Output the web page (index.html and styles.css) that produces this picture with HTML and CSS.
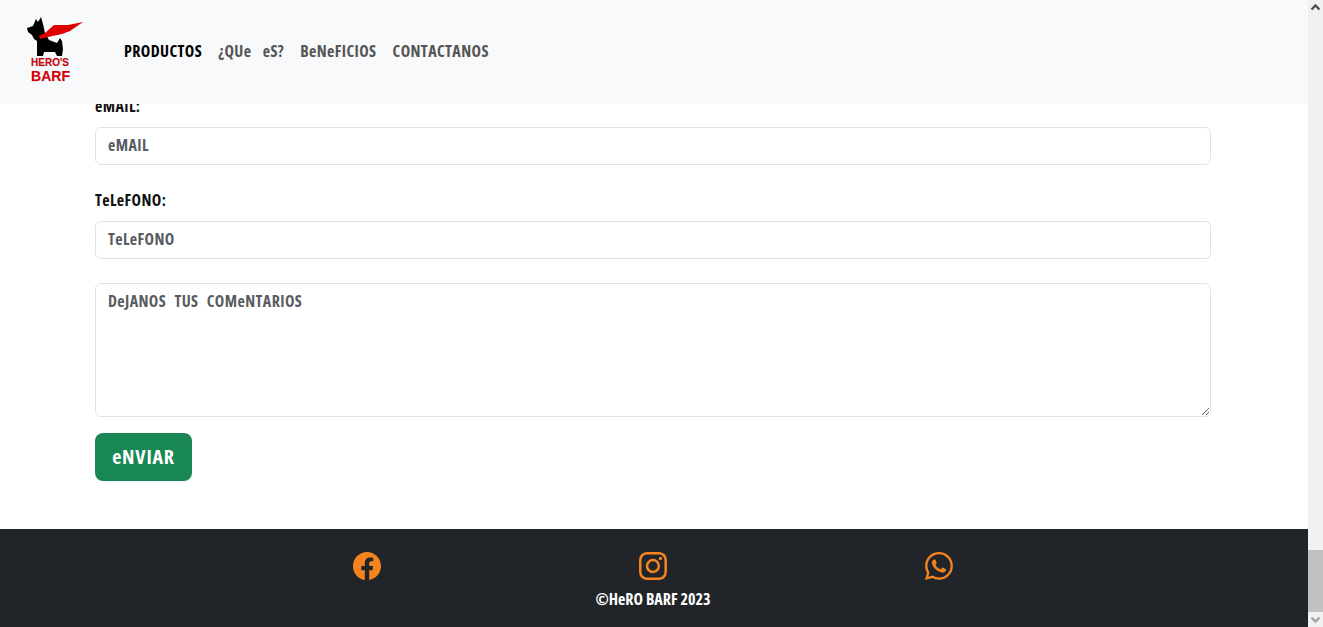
FILE: index.html
```html
<!DOCTYPE html>
<html lang="es">
<head>
    <meta charset="UTF-8">
    <title>Hero's Barf</title>
    <meta name="viewport" content="width=device-width, initial-scale=1">
    <link rel="stylesheet" href="styles.css">
</head>
<body>
    <div class="window">
        <div class="page">
            <nav class="navbar">
                <a class="brand" href="#">
                    <svg class="logo" viewBox="24 14 64 72">
                        <path class="dog" d="M27 28 L33 26 L36 19 L38 22 L41 17 L43 24 L45 33 L49 40 L57 43 L60 38 L62 41 L63 49 L62 56 L57 56 L55 52 L44 52 L43 56 L37 56 L37 41 L34 39 L32 35 L28 32 Z"/>
                        <path class="cape" d="M39 36 L45 33 L54 25 L68 25 L83 22 L70 31 L62 34 L48 37 L40 39 Z"/>
                        <text class="logo-top" x="50" y="66" text-anchor="middle">HERO'S</text>
                        <text class="logo-bottom" x="50.5" y="81" text-anchor="middle">BARF</text>
                    </svg>
                </a>
                <ul class="nav-links">
                    <li><a class="active" href="#">PRODUCTOS</a></li>
                    <li><a href="#">¿QUe eS?</a></li>
                    <li><a href="#">BeNeFICIOS</a></li>
                    <li><a href="#">CONTACTANOS</a></li>
                </ul>
            </nav>

            <main class="content">
                <form class="contact-form">
                    <div class="field">
                        <label for="email">eMAIL:</label>
                        <input id="email" type="text" placeholder="eMAIL">
                    </div>
                    <div class="field">
                        <label for="telefono">TeLeFONO:</label>
                        <input id="telefono" type="text" placeholder="TeLeFONO">
                    </div>
                    <textarea placeholder="DeJANOS TUS COMeNTARIOS"></textarea>
                    <button type="submit">eNVIAR</button>
                </form>
            </main>

            <footer class="footer">
                <div class="social">
                    <a href="#"><svg viewBox="0 0 16 16"><path d="M16 8.049c0-4.446-3.582-8.05-8-8.05C3.58 0-.002 3.603-.002 8.05c0 4.017 2.926 7.347 6.75 7.951v-5.625h-2.03V8.05H6.75V6.275c0-2.017 1.195-3.131 3.022-3.131.876 0 1.791.157 1.791.157v1.98h-1.009c-.993 0-1.303.621-1.303 1.258v1.51h2.218l-.354 2.326H9.25V16c3.824-.604 6.75-3.934 6.75-7.951z"/></svg></a>
                    <a href="#"><svg viewBox="0 0 16 16"><path d="M8 0C5.829 0 5.556.01 4.703.048 3.85.088 3.269.222 2.76.42a3.917 3.917 0 0 0-1.417.923A3.927 3.927 0 0 0 .42 2.76C.222 3.268.087 3.85.048 4.7.01 5.555 0 5.827 0 8.001c0 2.172.01 2.444.048 3.297.04.852.174 1.433.372 1.942.205.526.478.972.923 1.417.444.445.89.719 1.416.923.51.198 1.09.333 1.942.372C5.555 15.99 5.827 16 8 16s2.444-.01 3.298-.048c.851-.04 1.434-.174 1.943-.372a3.916 3.916 0 0 0 1.416-.923c.445-.445.718-.891.923-1.417.197-.509.332-1.09.372-1.942C15.99 10.445 16 10.173 16 8s-.01-2.445-.048-3.299c-.04-.851-.175-1.433-.372-1.941a3.926 3.926 0 0 0-.923-1.417A3.911 3.911 0 0 0 13.24.42c-.51-.198-1.092-.333-1.943-.372C10.443.01 10.172 0 7.998 0h.003zm-.717 1.442h.718c2.136 0 2.389.007 3.232.046.78.035 1.204.166 1.486.275.373.145.64.319.92.599.28.28.453.546.598.92.11.281.24.705.275 1.485.039.843.047 1.096.047 3.231s-.008 2.389-.047 3.232c-.035.78-.166 1.203-.275 1.485a2.47 2.47 0 0 1-.599.919c-.28.28-.546.453-.92.598-.28.11-.704.24-1.485.276-.843.038-1.096.047-3.232.047s-2.39-.009-3.233-.047c-.78-.036-1.203-.166-1.485-.276a2.478 2.478 0 0 1-.92-.598 2.48 2.48 0 0 1-.6-.92c-.109-.281-.24-.705-.275-1.485-.038-.843-.046-1.096-.046-3.233 0-2.136.008-2.388.046-3.231.036-.78.166-1.204.276-1.486.145-.373.319-.64.599-.92.28-.28.546-.453.92-.598.282-.11.705-.24 1.485-.276.738-.034 1.024-.044 2.515-.045v.002zm4.988 1.328a.96.96 0 1 0 0 1.92.96.96 0 0 0 0-1.92zm-4.27 1.122a4.109 4.109 0 1 0 0 8.217 4.109 4.109 0 0 0 0-8.217zm0 1.441a2.667 2.667 0 1 1 0 5.334 2.667 2.667 0 0 1 0-5.334z"/></svg></a>
                    <a href="#"><svg viewBox="0 0 16 16"><path d="M13.601 2.326A7.854 7.854 0 0 0 7.994 0C3.627 0 .068 3.558.064 7.926c0 1.399.366 2.76 1.057 3.965L0 16l4.204-1.102a7.933 7.933 0 0 0 3.79.965h.004c4.368 0 7.926-3.558 7.93-7.93A7.898 7.898 0 0 0 13.6 2.326zM7.994 14.521a6.573 6.573 0 0 1-3.356-.92l-.24-.144-2.494.654.666-2.433-.156-.251a6.56 6.56 0 0 1-1.007-3.505c0-3.626 2.957-6.584 6.591-6.584a6.56 6.56 0 0 1 4.66 1.931 6.557 6.557 0 0 1 1.928 4.66c-.004 3.639-2.961 6.592-6.592 6.592zm3.615-4.934c-.197-.099-1.17-.578-1.353-.646-.182-.065-.315-.099-.445.099-.133.197-.513.646-.627.775-.114.133-.232.148-.43.05-.197-.1-.836-.308-1.592-.985-.59-.525-.985-1.175-1.103-1.372-.114-.198-.011-.304.088-.403.087-.088.197-.232.296-.346.1-.114.133-.198.198-.33.065-.134.034-.248-.015-.347-.05-.099-.445-1.076-.612-1.47-.16-.389-.323-.335-.445-.34-.114-.007-.247-.007-.38-.007a.729.729 0 0 0-.529.247c-.182.198-.691.677-.691 1.654 0 .977.71 1.916.81 2.049.098.133 1.394 2.132 3.383 2.992.47.205.84.326 1.129.418.475.152.904.129 1.246.08.38-.058 1.171-.48 1.338-.943.164-.464.164-.86.114-.943-.049-.084-.182-.133-.38-.232z"/></svg></a>
                </div>
                <p class="copyright">©HeRO BARF 2023</p>
            </footer>
        </div>

        <div class="scrollbar">
            <svg class="arrow arrow-up" viewBox="0 0 15 15"><path d="M3.5 9.5 7.5 5.5 11.5 9.5"/></svg>
            <div class="track"><div class="thumb"></div></div>
            <svg class="arrow arrow-down" viewBox="0 0 15 15"><path d="M3.5 5.5 7.5 9.5 11.5 5.5"/></svg>
        </div>
    </div>
</body>
</html>
```

FILE: styles.css
```css
* {
    box-sizing: border-box;
}

body {
    margin: 0;
    font-family: 'Open Sans', 'Liberation Sans', sans-serif;
    font-weight: 700;
    font-stretch: 75%;
    font-size: 16px;
    line-height: 24px;
    letter-spacing: 0.4px;
    word-spacing: 5px;
    color: #212529;
    background: #fff;
    overflow: hidden;
}

.window {
    display: flex;
    height: 100vh;
}

.page {
    position: relative;
    flex: 1;
    min-width: 0;
    overflow: hidden;
}

.navbar {
    position: absolute;
    top: 0;
    left: 0;
    right: 0;
    z-index: 10;
    height: 104px;
    padding-left: 24px;
    display: flex;
    align-items: center;
    background: #f8f9fa;
}

.brand {
    display: block;
    align-self: flex-start;
    width: 64px;
    height: 72px;
    margin-top: 14px;
    margin-right: 36px;
}

.logo {
    display: block;
    width: 64px;
    height: 72px;
}

.dog {
    fill: #000;
}

.cape {
    fill: #dc0000;
}

.logo-top,
.logo-bottom {
    fill: #e0000a;
    stroke: rgba(0, 0, 0, 0.3);
    stroke-width: 0.4;
    font-family: 'Liberation Sans', sans-serif;
    font-stretch: normal;
    font-weight: 700;
    letter-spacing: 0;
    word-spacing: 0;
}

.logo-top {
    font-size: 10px;
}

.logo-bottom {
    font-size: 14px;
}

.nav-links {
    display: flex;
    gap: 16px;
    margin: -2px 0 0;
    padding: 0;
    list-style: none;
    word-spacing: 8px;
}

.nav-links a {
    color: #555;
    text-decoration: none;
}

.nav-links a.active {
    color: #000;
}

.content {
    padding: 95px 97px 48px 95px;
}

.field {
    margin-bottom: 24px;
}

.field label {
    display: block;
    line-height: 22px;
    margin-bottom: 10px;
    color: #111;
}

input,
textarea {
    display: block;
    width: 100%;
    padding: 5px 12px 7px;
    border: 1px solid #dee2e6;
    border-radius: 6px;
    font: inherit;
    letter-spacing: inherit;
    word-spacing: inherit;
    color: #212529;
    background: #fff;
}

input {
    height: 38px;
}

textarea {
    height: 134px;
    margin-bottom: 16px;
}

input::placeholder,
textarea::placeholder {
    color: #595c5f;
    opacity: 1;
}

button {
    display: block;
    width: 97px;
    height: 48px;
    border: none;
    border-radius: 8px;
    background: #198754;
    color: #fff;
    font: inherit;
    font-size: 20px;
    letter-spacing: 0.8px;
    cursor: pointer;
}

.footer {
    height: 98px;
    padding-top: 23px;
    background: #212529;
    color: #fff;
    text-align: center;
}

.social {
    display: grid;
    grid-template-columns: repeat(3, 286px);
    justify-content: center;
    justify-items: center;
    margin-right: 2px;
}

.social a {
    display: block;
    height: 28px;
}

.social svg {
    display: block;
    width: 28px;
    height: 28px;
    fill: #f5841f;
}

.copyright {
    margin: 7px 2px 0 0;
    letter-spacing: 0;
    word-spacing: 0;
}

.scrollbar {
    width: 15px;
    display: flex;
    flex-direction: column;
    background: #f1f1f1;
}

.track {
    flex: 1;
    display: flex;
    flex-direction: column;
    justify-content: flex-end;
}

.thumb {
    height: 62px;
    background: #c1c1c1;
}

.arrow {
    display: block;
    width: 15px;
    height: 15px;
    fill: none;
    stroke-width: 2.4;
}

.arrow-up {
    stroke: #505050;
}

.arrow-down {
    stroke: #a3a3a3;
}
```
